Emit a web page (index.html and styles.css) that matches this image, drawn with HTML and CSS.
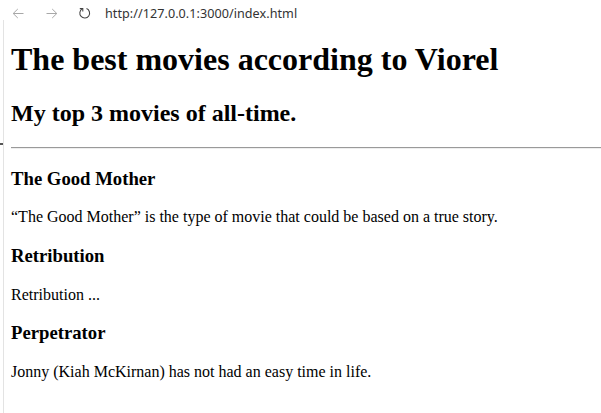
FILE: index.html
```html
<!DOCTYPE html>
<html lang="en">
<head>
<meta charset="utf-8">
<title>The best movies according to Viorel</title>
<link rel="stylesheet" href="styles.css">
</head>
<body>
<div class="toolbar">
  <span class="nav-btn back">
    <svg width="12" height="11" viewBox="0 0 12 11"><path d="M11.5 5.5H1.2M5.8 1L1.2 5.5l4.6 4.5" fill="none" stroke="#a8a8a8" stroke-width="1"/></svg>
  </span>
  <span class="nav-btn fwd">
    <svg width="12" height="11" viewBox="0 0 12 11"><path d="M0.5 5.5h10.3M6.2 1l4.6 4.5-4.6 4.5" fill="none" stroke="#a8a8a8" stroke-width="1"/></svg>
  </span>
  <span class="nav-btn reload">
    <svg width="13" height="13" viewBox="0 0 13 13"><path d="M4.3 1.9A4.9 4.9 0 1 0 8.5 1.6" fill="none" stroke="#444" stroke-width="1.05"/><path d="M1.8 1.6h3v3" fill="none" stroke="#444" stroke-width="1.05"/></svg>
  </span>
  <span class="url">http://127.0.0.1:3000/index.html</span>
</div>
<div class="viewport">
  <span class="edge-tick"></span>
  <div class="page">
    <h1>The best movies according to Viorel</h1>
    <h2>My top 3 movies of all-time.</h2>
    <hr class="rule">
    <h3>The Good Mother</h3>
    <p>“The Good Mother” is the type of movie that could be based on a true story.</p>
    <h3>Retribution</h3>
    <p>Retribution ...</p>
    <h3>Perpetrator</h3>
    <p>Jonny (Kiah McKirnan) has not had an easy time in life.</p>
  </div>
</div>
</body>
</html>
```
FILE: styles.css
```css
html, body {
  margin: 0;
  padding: 0;
  background: #ffffff;
  overflow: hidden;
}
body {
  width: 601px;
  height: 413px;
  position: relative;
}
.toolbar {
  box-sizing: border-box;
  height: 20px;
  padding-top: 6px;
  display: flex;
  align-items: center;
  background: #ffffff;
  font-family: "Noto Sans", "Open Sans", sans-serif;
}
.nav-btn {
  display: flex;
  align-items: center;
  justify-content: center;
}
.nav-btn svg { display: block; }
.back { margin-left: 12px; }
.fwd { margin-left: 22px; }
.reload { margin-left: 20px; }
.url {
  margin-left: 14px;
  font-size: 12.6px;
  color: #333333;
  letter-spacing: 0.05px;
}
.viewport {
  margin-left: 3px;
  border-left: 1px solid #e3e3e3;
  height: 393px;
  overflow: hidden;
}
.edge-tick {
  position: absolute;
  left: 0;
  top: 143px;
  width: 3px;
  height: 2px;
  background: #555555;
}
.page {
  width: 620px;
  padding: 1px 0 0 7px;
  margin-top: -1px;
  font-family: "Liberation Serif", "Times New Roman", serif;
  color: #000000;
}
.page h1 {
  font-size: 32px;
  margin: 21.44px 0;
}
.page h2 {
  font-size: 24px;
  margin: 19.92px 0;
}
.page h3 {
  font-size: 18.72px;
  margin: 18.72px 0;
}
.page p {
  font-size: 16px;
  margin: 16px 0;
}
.rule {
  margin: 8px 0;
  height: 0;
  border: none;
  border-top: 1px solid #9a9a9a;
  border-bottom: 1px solid #eeeeee;
}
```
